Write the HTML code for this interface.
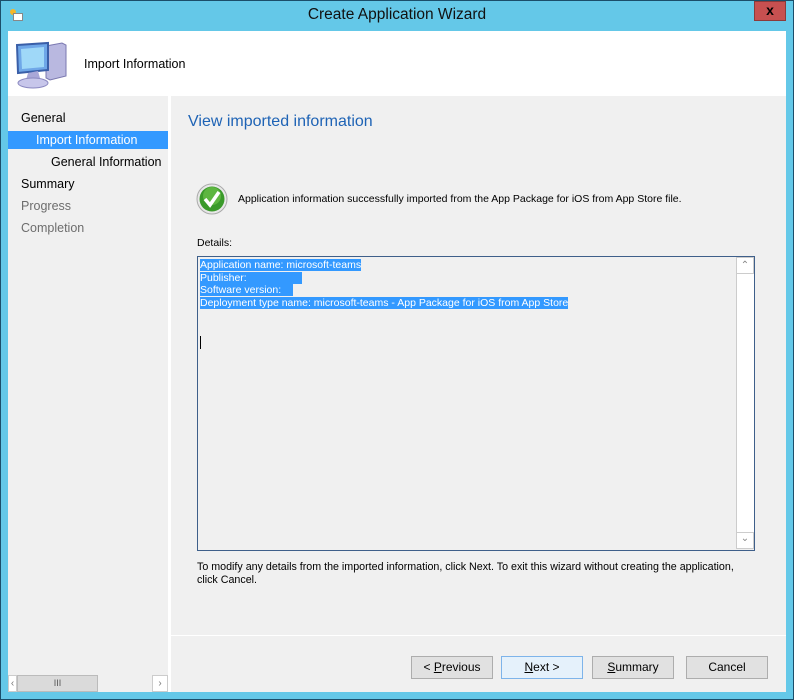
<!DOCTYPE html>
<html><head><meta charset="utf-8"><style>
*{margin:0;padding:0;box-sizing:border-box}
body{width:794px;height:700px;background:#64c8e8;font-family:"Liberation Sans",sans-serif;font-size:12px;color:#000;position:relative;overflow:hidden}
.abs{position:absolute}
.win{left:0;top:0;width:794px;height:700px;border:1px solid #1b4e6a}
.title{left:0;top:6px;width:794px;text-align:center;font-size:15.5px;color:#111}
.close{left:754px;top:1px;width:32px;height:20px;background:#c75050;border:1px solid #8c3a3a;color:#000;font-weight:bold;text-align:center;font-size:14px;line-height:17px}
.hdr{left:8px;top:31px;width:778px;height:65px;background:#fff}
.nav{left:8px;top:96px;width:160px;height:596px;background:#f0f0f0}
.gap{left:168px;top:96px;width:3px;height:596px;background:#fff}
.main{left:171px;top:96px;width:615px;height:596px;background:#f0f0f0}
.n{position:absolute;font-size:12.5px}
.btn{position:absolute;top:656px;width:82px;height:23px;background:#e1e1e1;border:1px solid #adadad;text-align:center;line-height:21px;font-size:12px}
.sel{background:#3399ff;color:#fff}
</style></head><body>
<div class="abs win"></div>
<div class="abs" style="left:10px;top:9px;width:14px;height:12px">
<div class="abs" style="left:0;top:0;width:6px;height:6px;border-radius:3px;background:#f5b82a"></div>
<div class="abs" style="left:3px;top:4px;width:10px;height:8px;background:#fff;border:1px solid #888"></div></div>
<div class="abs title">Create Application Wizard</div>
<div class="abs close">x</div>
<div class="abs hdr"></div>
<svg class="abs" style="left:14px;top:40px" width="54" height="50" viewBox="0 0 54 50">
<path d="M32 6 L48 3 L52 5 L52 36 L36 40 L32 38 Z" fill="#b9b8e0" stroke="#7a78b0"/>
<path d="M3 5 L34 3 L34 30 L4 33 Z" fill="#6fa7e8" stroke="#3a5fa8" stroke-width="2"/>
<path d="M7 9 L30 7 L30 27 L8 29 Z" fill="#9fd8f8"/>
<path d="M14 33 L24 31 L26 38 L12 40 Z" fill="#a9a7d8"/>
<ellipse cx="19" cy="43" rx="15" ry="5" fill="#c7c6ea" stroke="#8a88c0"/>
</svg>
<div class="abs" style="left:84px;top:57px;font-size:12.5px">Import Information</div>
<div class="abs nav"></div>
<div class="abs gap"></div>
<div class="abs main"></div>
<div class="n" style="left:21px;top:111px">General</div>
<div class="abs sel" style="left:8px;top:131px;width:160px;height:18px"></div>
<div class="n" style="left:36px;top:133px;color:#fff">Import Information</div>
<div class="n" style="left:51px;top:155px">General Information</div>
<div class="n" style="left:21px;top:177px">Summary</div>
<div class="n" style="left:21px;top:199px;color:#6d6d6d">Progress</div>
<div class="n" style="left:21px;top:221px;color:#6d6d6d">Completion</div>
<div class="abs" style="left:8px;top:675px;width:160px;height:17px;background:#e8e8e8;border:1px solid #ccc"></div>
<div class="abs" style="left:8px;top:675px;width:9px;height:17px;background:#fff;border:1px solid #ccc;font-size:10px;color:#777;line-height:15px;text-align:center">&lsaquo;</div>
<div class="abs" style="left:17px;top:675px;width:81px;height:17px;background:#dadada;border:1px solid #bbb;font-size:9px;color:#555;text-align:center;line-height:15px">III</div>
<div class="abs" style="left:98px;top:675px;width:54px;height:17px;background:#f0f0f0"></div>
<div class="abs" style="left:152px;top:675px;width:16px;height:17px;background:#fff;border:1px solid #ccc;font-size:10px;color:#777;line-height:15px;text-align:center">&rsaquo;</div>
<div class="abs" style="left:188px;top:113px;font-size:16px;color:#1e63b5">View imported information</div>
<svg class="abs" style="left:196px;top:183px" width="32" height="32" viewBox="0 0 32 32">
<circle cx="16" cy="16" r="15" fill="#e8e8e8" stroke="#aaa"/>
<circle cx="16" cy="16" r="12.5" fill="#3a9a2a"/>
<circle cx="16" cy="13" r="9" fill="#6cc24a" opacity=".7"/>
<path d="M9 16 L14 22 L23 9" fill="none" stroke="#fff" stroke-width="3.5"/>
</svg>
<div class="abs" style="left:238px;top:193px;font-size:10.5px">Application information successfully imported from the App Package for iOS from App Store file.</div>
<div class="abs" style="left:197px;top:237px;font-size:10.5px">Details:</div>
<div class="abs" style="left:197px;top:256px;width:558px;height:295px;border:1px solid #3e5f8a;background:#f0f0f0"></div>
<div class="abs" style="left:736px;top:257px;width:18px;height:292px;background:#fff;border-left:1px solid #ccc"></div>
<div class="abs" style="left:736px;top:257px;width:18px;height:17px;border:1px solid #ccc;text-align:center;color:#888;font-size:10px;line-height:16px">&#8963;</div>
<div class="abs" style="left:736px;top:532px;width:18px;height:17px;border:1px solid #ccc;text-align:center;color:#888;font-size:10px;line-height:12px">&#8964;</div>
<div class="abs" style="left:200px;top:259px;font-size:10.5px;line-height:12.7px;color:#fff">
<span style="background:#3399ff">Application name: microsoft-teams</span><br>
<span style="background:#3399ff">Publisher: &nbsp;&nbsp;&nbsp;&nbsp;&nbsp;&nbsp;&nbsp;&nbsp;&nbsp;&nbsp;&nbsp;&nbsp;&nbsp;&nbsp;&nbsp;&nbsp;&nbsp;&nbsp;</span><br>
<span style="background:#3399ff">Software version: &nbsp;&nbsp;&nbsp;</span><br>
<span style="background:#3399ff">Deployment type name: microsoft-teams - App Package for iOS from App Store</span></div>
<div class="abs" style="left:200px;top:336px;width:1px;height:13px;background:#000"></div>
<div class="abs" style="left:197px;top:561px;font-size:10.7px;line-height:13px">To modify any details from the imported information, click Next. To exit this wizard without creating the application,<br>click Cancel.</div>
<div class="abs" style="left:171px;top:635px;width:615px;height:1px;background:#fff"></div>
<div class="btn" style="left:411px">&lt; <u>P</u>revious</div>
<div class="btn" style="left:501px;border-color:#7eb4ea;background:#e5f1fb"><u>N</u>ext &gt;</div>
<div class="btn" style="left:592px"><u>S</u>ummary</div>
<div class="btn" style="left:686px">Cancel</div>
</body></html>
